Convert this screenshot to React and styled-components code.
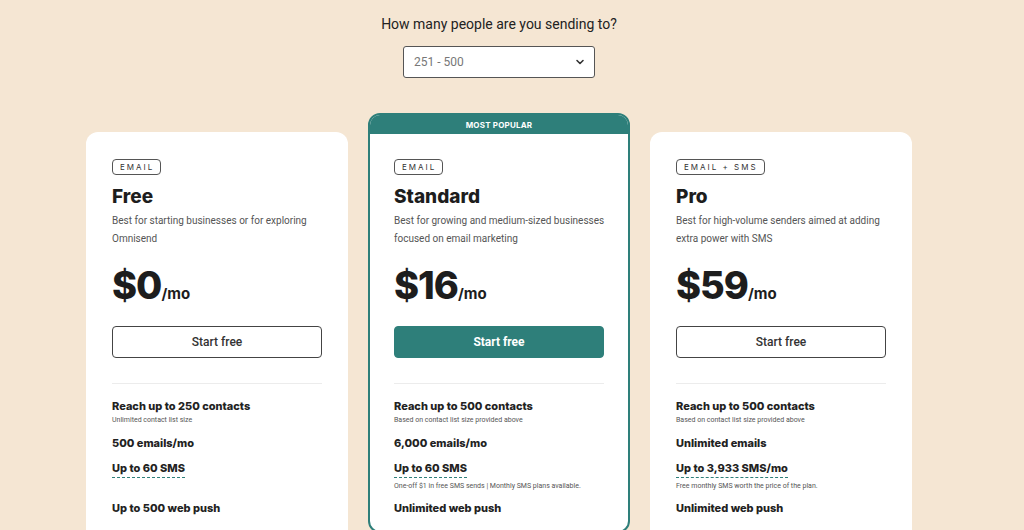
import React from "react";
import styled, { createGlobalStyle } from "styled-components";

const GlobalStyle = createGlobalStyle`
  html, body {
    margin: 0;
    padding: 0;
    height: 530px;
    overflow: hidden;
    background: #f5e6d3;
  }
  * { box-sizing: border-box; }
`;

const Page = styled.div`
  width: 998px;
  display: flex;
  flex-direction: column;
  align-items: center;
  padding-top: 14px;
  font-family: Roboto, "Liberation Sans", sans-serif;
`;

const Question = styled.div`
  font-size: 14px;
  line-height: 20px;
  color: #222;
`;

const Select = styled.div`
  margin-top: 12px;
  width: 192px;
  height: 32px;
  border: 1px solid #555;
  border-radius: 3px;
  background: #fff;
  display: flex;
  align-items: center;
  justify-content: space-between;
  padding: 0 9px 0 10px;
  font-size: 12px;
  color: #777;
`;

const Cards = styled.div`
  margin-top: 35px;
  display: flex;
  gap: 20px;
  align-items: flex-start;
`;

const Card = styled.div`
  width: 262px;
  height: 420px;
  margin-top: ${(p) => (p.$popular ? "0" : "19px")};
  background: #fff;
  border-radius: 12px;
  border: ${(p) => (p.$popular ? "2px solid #2e7f7a" : "none")};
  overflow: hidden;
  display: flex;
  flex-direction: column;
`;

const Ribbon = styled.div`
  height: 19px;
  flex-shrink: 0;
  background: #2e7f7a;
  color: #fff;
  font-family: Inter, "Liberation Sans", sans-serif;
  font-size: 8px;
  font-weight: 700;
  display: flex;
  align-items: center;
  justify-content: center;
  letter-spacing: 0.2px;
`;

const Body = styled.div`
  padding: ${(p) => (p.$popular ? "25px 24px 0" : "27px 26px 0")};
  display: flex;
  flex-direction: column;
  align-items: flex-start;
`;

const Badge = styled.div`
  height: 16px;
  padding: 0 6px 0 7px;
  border: 1px solid #555;
  border-radius: 4px;
  font-family: Inter, "Liberation Sans", sans-serif;
  font-size: 8px;
  letter-spacing: 2px;
  color: #333;
  display: flex;
  align-items: center;
`;

const Title = styled.div`
  margin-top: 10px;
  font-family: Inter, "Liberation Sans", sans-serif;
  font-size: 19px;
  line-height: 24px;
  font-weight: 800;
  color: #1d1d1d;
`;

const Desc = styled.div`
  margin-top: 3px;
  font-size: 10px;
  line-height: 18px;
  color: #555;
  width: 214px;
`;

const Price = styled.div`
  margin-top: 15px;
  font-family: Inter, "Liberation Sans", sans-serif;
  font-size: 38px;
  line-height: 44px;
  font-weight: 800;
  color: #1d1d1d;
  letter-spacing: -1px;
`;

const Per = styled.span`
  font-size: 15px;
  font-weight: 700;
  letter-spacing: 0;
`;

const Button = styled.div`
  margin-top: 10px;
  width: 210px;
  height: 32px;
  border-radius: 4px;
  border: 1px solid ${(p) => (p.$primary ? "#2e7f7a" : "#444")};
  background: ${(p) => (p.$primary ? "#2e7f7a" : "#fff")};
  color: ${(p) => (p.$primary ? "#fff" : "#333")};
  font-size: 12px;
  font-weight: ${(p) => (p.$primary ? 700 : 500)};
  display: flex;
  align-items: center;
  justify-content: center;
`;

const Divider = styled.div`
  margin-top: 25px;
  width: 210px;
  height: 1px;
  background: #ececec;
`;

const Features = styled.div`
  margin-top: 14px;
  display: flex;
  flex-direction: column;
`;

const Feature = styled.div`
  height: ${(p) => p.$h}px;
  display: flex;
  flex-direction: column;
  align-items: flex-start;
`;

const FeatureTitle = styled.div`
  font-family: Inter, "Liberation Sans", sans-serif;
  font-size: 11px;
  line-height: 16px;
  font-weight: 800;
  color: #222;
  padding-bottom: ${(p) => (p.$dashed ? "1px" : "0")};
  border-bottom: ${(p) => (p.$dashed ? "1px dashed #2e7f7a" : "none")};
`;

const FeatureNote = styled.div`
  margin-top: ${(p) => (p.$gap ? "3px" : "1px")};
  font-size: 7px;
  line-height: 10px;
  color: #555;
  white-space: nowrap;
`;

const Chevron = () => (
  <svg width="10" height="10" viewBox="0 0 10 10">
    <path d="M2 3.5 L5 6.5 L8 3.5" stroke="#333" strokeWidth="1.6" fill="none" strokeLinecap="round" strokeLinejoin="round" />
  </svg>
);

const plans = [
  {
    badge: "EMAIL",
    name: "Free",
    desc: "Best for starting businesses or for exploring Omnisend",
    price: "$0",
    features: [
      { t: "Reach up to 250 contacts", n: "Unlimited contact list size" },
      { t: "500 emails/mo" },
      { t: "Up to 60 SMS", dashed: true },
      { t: "Up to 500 web push" },
    ],
  },
  {
    badge: "EMAIL",
    name: "Standard",
    desc: "Best for growing and medium-sized businesses focused on email marketing",
    price: "$16",
    popular: true,
    features: [
      { t: "Reach up to 500 contacts", n: "Based on contact list size provided above" },
      { t: "6,000 emails/mo" },
      { t: "Up to 60 SMS", dashed: true, n: "One-off $1 in free SMS sends | Monthly SMS plans available." },
      { t: "Unlimited web push" },
    ],
  },
  {
    badge: "EMAIL + SMS",
    name: "Pro",
    desc: "Best for high-volume senders aimed at adding extra power with SMS",
    price: "$59",
    features: [
      { t: "Reach up to 500 contacts", n: "Based on contact list size provided above" },
      { t: "Unlimited emails" },
      { t: "Up to 3,933 SMS/mo", dashed: true, n: "Free monthly SMS worth the price of the plan." },
      { t: "Unlimited web push" },
    ],
  },
];

const heights = [37, 25, 40, 25];

export default function App() {
  return (
    <>
      <GlobalStyle />
      <Page>
        <Question>How many people are you sending to?</Question>
        <Select>
          <span>251 - 500</span>
          <Chevron />
        </Select>
        <Cards>
          {plans.map((plan) => (
            <Card key={plan.name} $popular={plan.popular}>
              {plan.popular && <Ribbon>MOST POPULAR</Ribbon>}
              <Body $popular={plan.popular}>
                <Badge>{plan.badge}</Badge>
                <Title>{plan.name}</Title>
                <Desc>{plan.desc}</Desc>
                <Price>
                  {plan.price}
                  <Per>/mo</Per>
                </Price>
                <Button $primary={plan.popular}>Start free</Button>
                <Divider />
                <Features>
                  {plan.features.map((f, i) => (
                    <Feature key={f.t} $h={heights[i]}>
                      <FeatureTitle $dashed={f.dashed}>{f.t}</FeatureTitle>
                      {f.n && <FeatureNote $gap={f.dashed}>{f.n}</FeatureNote>}
                    </Feature>
                  ))}
                </Features>
              </Body>
            </Card>
          ))}
        </Cards>
      </Page>
    </>
  );
}
